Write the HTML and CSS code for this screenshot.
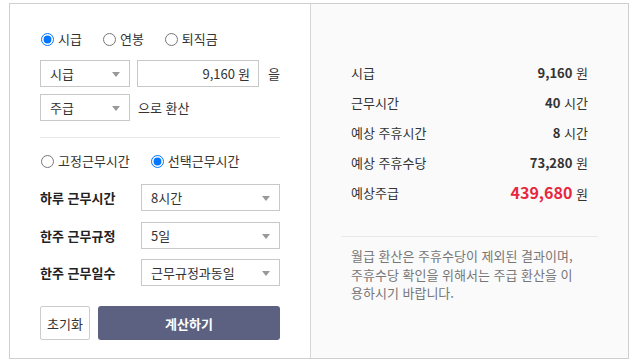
FILE: index.html
```html
<!DOCTYPE html>
<html lang="ko">
<head>
    <meta charset="UTF-8">
    <meta name="viewport" content="width=device-width, initial-scale=1.0">
    <title>주급 계산기</title>
    <link rel="stylesheet" href="styles.css">
</head>
<body>
    <div class="calc">
        <div class="form">
            <div class="radios">
                <label><input type="radio" name="unit" checked> 시급</label>
                <label><input type="radio" name="unit"> 연봉</label>
                <label><input type="radio" name="unit"> 퇴직금</label>
            </div>

            <div class="row first">
                <div class="select short"><select><option>시급</option></select></div>
                <div class="amount"><input type="text" value="9,160"><span>원</span></div>
                <span class="suffix">을</span>
            </div>
            <div class="row">
                <div class="select short"><select><option>주급</option></select></div>
                <span class="suffix wide">으로 환산</span>
            </div>

            <hr class="line">

            <div class="radios second">
                <label><input type="radio" name="mode"> 고정근무시간</label>
                <label><input type="radio" name="mode" checked> 선택근무시간</label>
            </div>

            <div class="field f1">
                <span class="name">하루 근무시간</span>
                <div class="select long"><select><option>8시간</option></select></div>
            </div>
            <div class="field f2">
                <span class="name">한주 근무규정</span>
                <div class="select long"><select><option>5일</option></select></div>
            </div>
            <div class="field f3">
                <span class="name">한주 근무일수</span>
                <div class="select long"><select><option>근무규정과동일</option></select></div>
            </div>

            <div class="buttons">
                <button class="btn reset">초기화</button>
                <button class="btn submit">계산하기</button>
            </div>
        </div>

        <div class="result">
            <div class="lines">
                <div class="item"><span>시급</span><span><b>9,160</b> 원</span></div>
                <div class="item"><span>근무시간</span><span><b>40</b> 시간</span></div>
                <div class="item"><span>예상 주휴시간</span><span><b>8</b> 시간</span></div>
                <div class="item"><span>예상 주휴수당</span><span><b>73,280</b> 원</span></div>
                <div class="item total"><span>예상주급</span><span><b>439,680</b> 원</span></div>
            </div>
            <hr class="line">
            <p class="note">월급 환산은 주휴수당이 제외된 결과이며,<br>주휴수당 확인을 위해서는 주급 환산을 이용하시기 바랍니다.</p>
        </div>
    </div>
</body>
</html>
```

FILE: styles.css
```css
body {
    margin: 0;
    font-family: "Noto Sans CJK KR", "Noto Sans", sans-serif;
    font-size: 13px;
    color: #333;
}
.calc {
    display: flex;
    width: 620px;
    height: 356px;
    margin: 3px 0 0 9px;
    border: 1px solid #cfcfcf;
    box-sizing: border-box;
}
.form {
    width: 300px;
    padding: 25px 30px 0 30px;
    box-sizing: border-box;
    background: #fff;
}
.result {
    flex: 1;
    border-left: 1px solid #d6d6d6;
    background: #fafafa;
    padding: 53px 30px 0 30px;
}
.radios {
    display: flex;
    gap: 20px;
    height: 20px;
    align-items: center;
}
.radios label {
    display: flex;
    align-items: center;
    gap: 4px;
    line-height: 20px;
}
.radios input {
    width: 13px;
    height: 13px;
    margin: 0 0 0 1px;
}
.radios.second {
    margin-top: 13px;
    gap: 20px;
}
.row {
    display: flex;
    align-items: center;
    margin-top: 7px;
}
.row.first {
    margin-top: 11px;
}
.select {
    position: relative;
    height: 27px;
    border: 1px solid #c8c8c8;
    box-sizing: border-box;
    background: #fff;
}
.select::after {
    content: "";
    position: absolute;
    right: 9px;
    top: 11px;
    border-left: 4px solid transparent;
    border-right: 4px solid transparent;
    border-top: 5px solid #999;
}
.select select {
    appearance: none;
    border: none;
    background: transparent;
    width: 100%;
    height: 100%;
    padding: 0 0 0 9px;
    font: inherit;
    color: #333;
    outline: none;
}
.short {
    width: 90px;
}
.long {
    width: 139px;
}
.amount {
    display: flex;
    align-items: center;
    width: 122px;
    height: 27px;
    margin-left: 7px;
    border: 1px solid #c8c8c8;
    box-sizing: border-box;
    padding-right: 8px;
}
.amount input {
    flex: 1;
    min-width: 0;
    border: none;
    text-align: right;
    font: inherit;
    color: #333;
    padding: 0 3px 0 0;
    outline: none;
}
.suffix {
    margin-left: 9px;
}
.suffix.wide {
    margin-left: 8px;
}
.line {
    border: none;
    border-top: 1px solid #e8e8e8;
    margin: 16px 0 0 0;
}
.field {
    display: flex;
    align-items: center;
}
.field .name {
    width: 101px;
    font-weight: bold;
    color: #222;
}
.f1 {
    margin-top: 13px;
}
.f2 {
    margin-top: 11px;
}
.f3 {
    margin-top: 10px;
}
.buttons {
    display: flex;
    gap: 8px;
    margin-top: 20px;
}
.btn {
    height: 34px;
    font: inherit;
    border-radius: 2px;
    cursor: pointer;
}
.reset {
    width: 50px;
    padding: 0;
    background: #fff;
    border: 1px solid #ccc;
    color: #333;
}
.submit {
    flex: 1;
    background: #5c6182;
    border: none;
    border-radius: 3px;
    color: #fff;
    font-weight: bold;
}
.lines {
    padding: 0 10px;
}
.item {
    display: flex;
    justify-content: space-between;
    align-items: center;
    height: 30px;
}
.item b {
    font-weight: bold;
}
.total b {
    color: #e8263f;
    font-size: 16px;
}
.result .line {
    margin-top: 29px;
}
.note {
    margin: 10px 0 0 0;
    padding: 0 20px 0 10px;
    line-height: 18.5px;
    color: #777;
    word-break: break-all;
}
```
